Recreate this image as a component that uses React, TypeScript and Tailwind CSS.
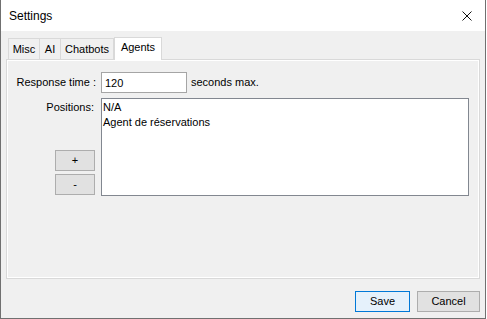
import { useState } from "react";

const tabs = ["Misc", "AI", "Chatbots", "Agents"];

const tabWidths: Record<string, string> = {
  Misc: "w-[32px] border-l",
  AI: "w-[21px]",
  Chatbots: "w-[53px]",
};

const positions = ["N/A", "Agent de réservations"];

const App = () => {
  const [responseTime, setResponseTime] = useState("120");
  const active = "Agents";

  return (
    <div className="w-[487px] h-[319px] bg-white font-['Liberation_Sans',Arial,sans-serif] text-[11px] text-black">
      <div className="w-[486px] h-[319px] flex flex-col border-l border-r border-b border-[#707070]">
        {/* Title bar */}
        <div className="h-[31px] flex items-center justify-between bg-white pl-[8px] pr-[13px]">
          <span className="text-[12px] text-[#000]">Settings</span>
          <svg width="10" height="10" viewBox="0 0 10 10" className="shrink-0">
            <path d="M0.5 0.5 L9.5 9.5 M9.5 0.5 L0.5 9.5" stroke="#111" strokeWidth="1" />
          </svg>
        </div>

        <div className="flex-1 bg-[#f0f0f0] pt-[6px] px-[5px] flex flex-col">
          {/* Tabs */}
          <div className="h-[22px] flex items-end pl-[2px] relative z-10">
            {tabs.map((t) =>
              t === active ? (
                <div
                  key={t}
                  className="w-[48px] h-[23px] -mb-px bg-white border-l border-t border-r border-[#d9d9d9] flex items-start justify-center pt-[2px] leading-[15px]"
                >
                  {t}
                </div>
              ) : (
                <div
                  key={t}
                  className={`${tabWidths[t]} h-[21px] border-t border-r border-[#d9d9d9] bg-[#f0f0f0] flex items-center justify-center leading-[15px] pt-[1px]`}
                >
                  {t}
                </div>
              )
            )}
          </div>

          {/* Tab page */}
          <div className="h-[220px] border border-[#d9d9d9]">
            <div className="h-full border border-white pt-[11px]">
              <div className="flex items-center">
                <div className="w-[88px] text-right">Response time :</div>
                <input
                  value={responseTime}
                  onChange={(e) => setResponseTime(e.target.value)}
                  className="ml-[5px] w-[86px] h-[21px] border border-[#a5a5a5] bg-white pl-[3px] outline-none text-[11px]"
                />
                <span className="ml-[4px]">seconds max.</span>
              </div>

              <div className="flex mt-[5px]">
                <div className="w-[88px] h-[98px] flex flex-col items-end justify-between">
                  <div className="pr-[2px] pt-[2px] leading-[15px]">Positions:</div>
                  <div className="flex flex-col gap-[3px] mb-[1px] mr-[1px]">
                    <button className="w-[40px] h-[21px] bg-[#e1e1e1] border border-[#adadad] leading-none">
                      +
                    </button>
                    <button className="w-[40px] h-[21px] bg-[#e1e1e1] border border-[#adadad] leading-none">
                      -
                    </button>
                  </div>
                </div>
                <div className="ml-[5px] w-[368px] h-[98px] border border-[#828790] bg-white pl-[1px] pt-[1px]">
                  {positions.map((p) => (
                    <div key={p} className="leading-[15px]">
                      {p}
                    </div>
                  ))}
                </div>
              </div>
            </div>
          </div>

          {/* Footer */}
          <div className="mt-[12px] flex justify-end gap-[7px]">
            <button className="w-[55px] h-[21px] bg-[#e5f1fb] border border-[#0078d7] leading-none">
              Save
            </button>
            <button className="w-[63px] h-[21px] bg-[#e1e1e1] border border-[#adadad] leading-none">
              Cancel
            </button>
          </div>
        </div>
      </div>
    </div>
  );
};

export default App;
